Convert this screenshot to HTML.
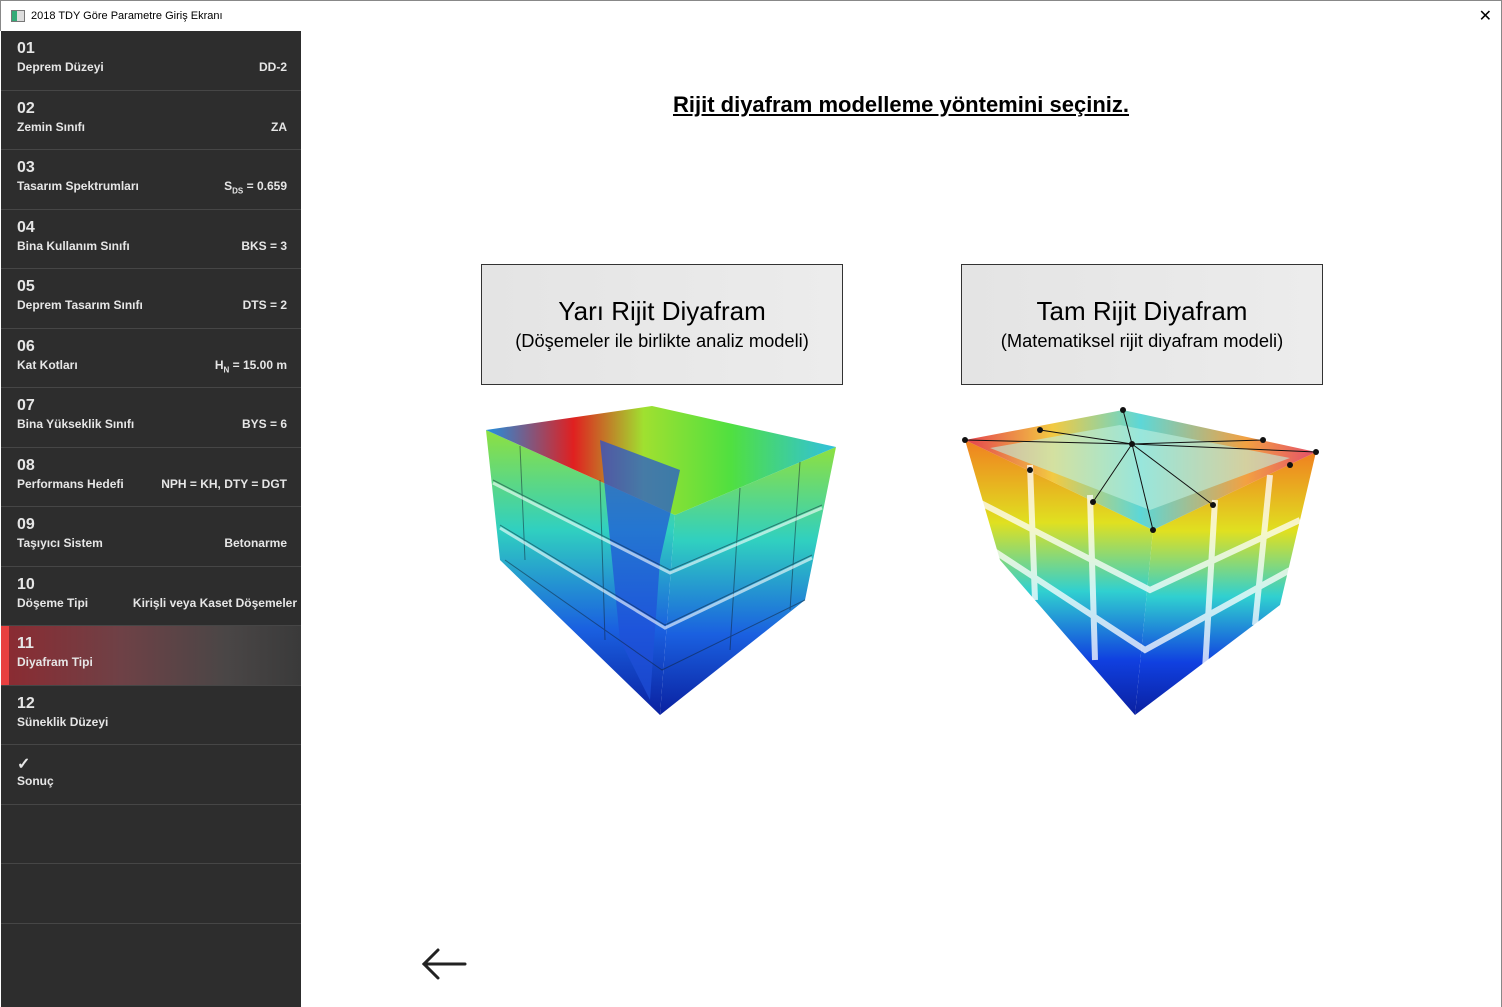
<!DOCTYPE html>
<html><head><meta charset="utf-8"><style>
*{margin:0;padding:0;box-sizing:border-box}
body{width:1502px;height:1007px;background:#fff;position:relative;overflow:hidden;font-family:"Liberation Sans",Arial,sans-serif}
.tb{position:absolute;left:0;top:0;width:1502px;height:31px;background:#fff;border:1px solid #888;border-bottom:none}
.tb .t{position:absolute;left:30px;top:9px;font-size:11px;color:#000}
.tb .ic{position:absolute;left:10px;top:9px;width:14px;height:12px;border:1px solid #777;background:linear-gradient(90deg,#3a7 0 40%,#ddd 40%)}
.tb .x{position:absolute;right:9px;top:5px;font-size:16px;color:#000;font-family:"DejaVu Sans",sans-serif;font-weight:normal}
.side{position:absolute;left:1px;top:31px;width:300px;height:976px;background:#2d2d2d}
.row{position:absolute;left:0;width:300px;height:59.5px;border-bottom:1px solid #464646;color:#e6e6e6;font-weight:bold}
.row .n{position:absolute;left:16px;top:9px;font-size:16px}
.row .l{position:absolute;left:16px;top:29px;font-size:12px}
.row .v{position:absolute;right:14px;top:29px;font-size:12px}
.act{background:linear-gradient(90deg,#8c2a31 0%,#6e4146 40%,#4a4646 75%,#3a3a3a 100%)}
.act:before{content:"";position:absolute;left:0;top:0;width:8px;height:100%;background:#e84040}
.ttl{position:absolute;left:301px;width:1200px;top:92px;text-align:center;font-size:22px;font-weight:bold;text-decoration:underline;color:#000}
.btn{position:absolute;top:264px;width:362px;height:121px;border:1px solid #333;background:linear-gradient(90deg,#e4e4e4,#ececec);text-align:center;color:#000}
.btn .a{margin-top:31px;font-size:26px}
.btn .b{margin-top:3px;font-size:18.3px}
.rb{position:absolute;right:0;top:31px;width:1px;height:976px;background:#888}
</style></head><body>
<div class="tb"><div class="ic"></div><div class="t">2018 TDY Göre Parametre Giriş Ekranı</div><div class="x">✕</div></div>
<div class="side">
<div class="row" style="top:0"><div class="n">01</div><div class="l">Deprem Düzeyi</div><div class="v">DD-2</div></div>
<div class="row" style="top:59.5px"><div class="n">02</div><div class="l">Zemin Sınıfı</div><div class="v">ZA</div></div>
<div class="row" style="top:119px"><div class="n">03</div><div class="l">Tasarım Spektrumları</div><div class="v">S<sub style="font-size:8px">DS</sub> = 0.659</div></div>
<div class="row" style="top:178.5px"><div class="n">04</div><div class="l">Bina Kullanım Sınıfı</div><div class="v">BKS = 3</div></div>
<div class="row" style="top:238px"><div class="n">05</div><div class="l">Deprem Tasarım Sınıfı</div><div class="v">DTS = 2</div></div>
<div class="row" style="top:297.5px"><div class="n">06</div><div class="l">Kat Kotları</div><div class="v">H<sub style="font-size:8px">N</sub> = 15.00 m</div></div>
<div class="row" style="top:357px"><div class="n">07</div><div class="l">Bina Yükseklik Sınıfı</div><div class="v">BYS = 6</div></div>
<div class="row" style="top:416.5px"><div class="n">08</div><div class="l">Performans Hedefi</div><div class="v">NPH = KH, DTY = DGT</div></div>
<div class="row" style="top:476px"><div class="n">09</div><div class="l">Taşıyıcı Sistem</div><div class="v">Betonarme</div></div>
<div class="row" style="top:535.5px"><div class="n">10</div><div class="l">Döşeme Tipi</div><div class="v" style="right:4px">Kirişli veya Kaset Döşemeler</div></div>
<div class="row act" style="top:595px"><div class="n">11</div><div class="l">Diyafram Tipi</div></div>
<div class="row" style="top:654.5px"><div class="n">12</div><div class="l">Süneklik Düzeyi</div></div>
<div class="row" style="top:714px"><div class="n">✓</div><div class="l">Sonuç</div></div>
<div class="row" style="top:773.5px"></div>
<div class="row" style="top:833px"></div>
<div class="row" style="top:892.5px;border-bottom:none"></div>
</div>
<div class="rb"></div>
<div class="ttl">Rijit diyafram modelleme yöntemini seçiniz.</div>
<div class="btn" style="left:481px"><div class="a">Yarı Rijit Diyafram</div><div class="b">(Döşemeler ile birlikte analiz modeli)</div></div>
<div class="btn" style="left:961px"><div class="a">Tam Rijit Diyafram</div><div class="b">(Matematiksel rijit diyafram modeli)</div></div>
<svg width="1502" height="1007" style="position:absolute;left:0;top:0">
<defs>
<linearGradient id="v2" x1="0" y1="0" x2="0" y2="1"><stop offset="0" stop-color="#8ee040"/><stop offset=".35" stop-color="#30d0c0"/><stop offset=".7" stop-color="#1a60e0"/><stop offset="1" stop-color="#0a20a0"/></linearGradient>
<linearGradient id="t1" x1="0" y1="0" x2="1" y2="0"><stop offset="0" stop-color="#2090e0"/><stop offset=".25" stop-color="#e02020"/><stop offset=".45" stop-color="#a0e030"/><stop offset=".7" stop-color="#50e040"/><stop offset="1" stop-color="#30c0e0"/></linearGradient>
<linearGradient id="t2" x1="0" y1="0" x2="1" y2="0"><stop offset="0" stop-color="#e02030"/><stop offset=".25" stop-color="#f0c020"/><stop offset=".5" stop-color="#40d0d0"/><stop offset=".8" stop-color="#f09020"/><stop offset="1" stop-color="#e03050"/></linearGradient>
<linearGradient id="r2" x1="0" y1="0" x2="0" y2="1"><stop offset="0" stop-color="#f08020"/><stop offset=".3" stop-color="#e0e020"/><stop offset=".55" stop-color="#30d0d0"/><stop offset=".8" stop-color="#1040e0"/><stop offset="1" stop-color="#0a20a0"/></linearGradient>
</defs>
<!-- left building -->
<polygon points="486,430 675,515 660,715 500,560" fill="url(#v2)"/>
<polygon points="675,515 836,447 805,600 660,715" fill="url(#v2)"/>
<polygon points="486,430 652,406 836,447 675,515" fill="url(#t1)"/>
<polygon points="600,440 680,470 660,560 650,700 620,640" fill="#2050d8" opacity=".7"/>
<g stroke="#123" stroke-width="1" fill="none" opacity=".5">
<polyline points="493,480 670,570 822,505"/><polyline points="500,525 665,625 812,555"/><polyline points="505,560 662,670 805,600"/>
<line x1="520" y1="446" x2="525" y2="560"/><line x1="600" y1="480" x2="605" y2="640"/><line x1="740" y1="488" x2="730" y2="650"/><line x1="800" y1="462" x2="790" y2="610"/>
</g>
<g stroke="#fff" stroke-width="3" opacity=".6" fill="none"><polyline points="493,483 670,573 822,508"/><polyline points="500,528 665,628 812,558"/></g>
<!-- right building -->
<polygon points="965,440 1153,530 1135,715 1000,560" fill="url(#r2)"/>
<polygon points="1153,530 1316,452 1280,605 1135,715" fill="url(#r2)"/>
<polygon points="965,440 1123,410 1316,452 1153,530" fill="url(#t2)" opacity=".85"/>
<polygon points="990,448 1120,425 1290,458 1150,510" fill="#bff0e0" opacity=".6"/>
<g stroke="#fff" stroke-width="6" opacity=".75" fill="none">
<polyline points="975,500 1150,590 1300,520"/><polyline points="985,545 1145,650 1290,570"/>
<line x1="1030" y1="465" x2="1035" y2="600"/><line x1="1090" y1="495" x2="1095" y2="660"/><line x1="1215" y1="500" x2="1205" y2="670"/><line x1="1270" y1="475" x2="1255" y2="625"/>
</g>
<g stroke="#111" stroke-width="1"><line x1="1132" y1="444" x2="965" y2="440"/><line x1="1132" y1="444" x2="1123" y2="410"/><line x1="1132" y1="444" x2="1316" y2="452"/><line x1="1132" y1="444" x2="1153" y2="530"/><line x1="1132" y1="444" x2="1093" y2="502"/><line x1="1132" y1="444" x2="1213" y2="505"/><line x1="1132" y1="444" x2="1040" y2="430"/><line x1="1132" y1="444" x2="1263" y2="440"/></g>
<g fill="#111"><circle cx="1132" cy="444" r="3"/><circle cx="965" cy="440" r="3"/><circle cx="1123" cy="410" r="3"/><circle cx="1316" cy="452" r="3"/><circle cx="1153" cy="530" r="3"/><circle cx="1093" cy="502" r="3"/><circle cx="1213" cy="505" r="3"/><circle cx="1040" cy="430" r="3"/><circle cx="1263" cy="440" r="3"/><circle cx="1030" cy="470" r="3"/><circle cx="1290" cy="465" r="3"/></g>
<!-- back arrow -->
<g stroke="#222" stroke-width="3" fill="none" stroke-linecap="round"><line x1="424" y1="964" x2="465" y2="964"/><polyline points="438,950 424,964 438,978"/></g>
</svg>
</body></html>
